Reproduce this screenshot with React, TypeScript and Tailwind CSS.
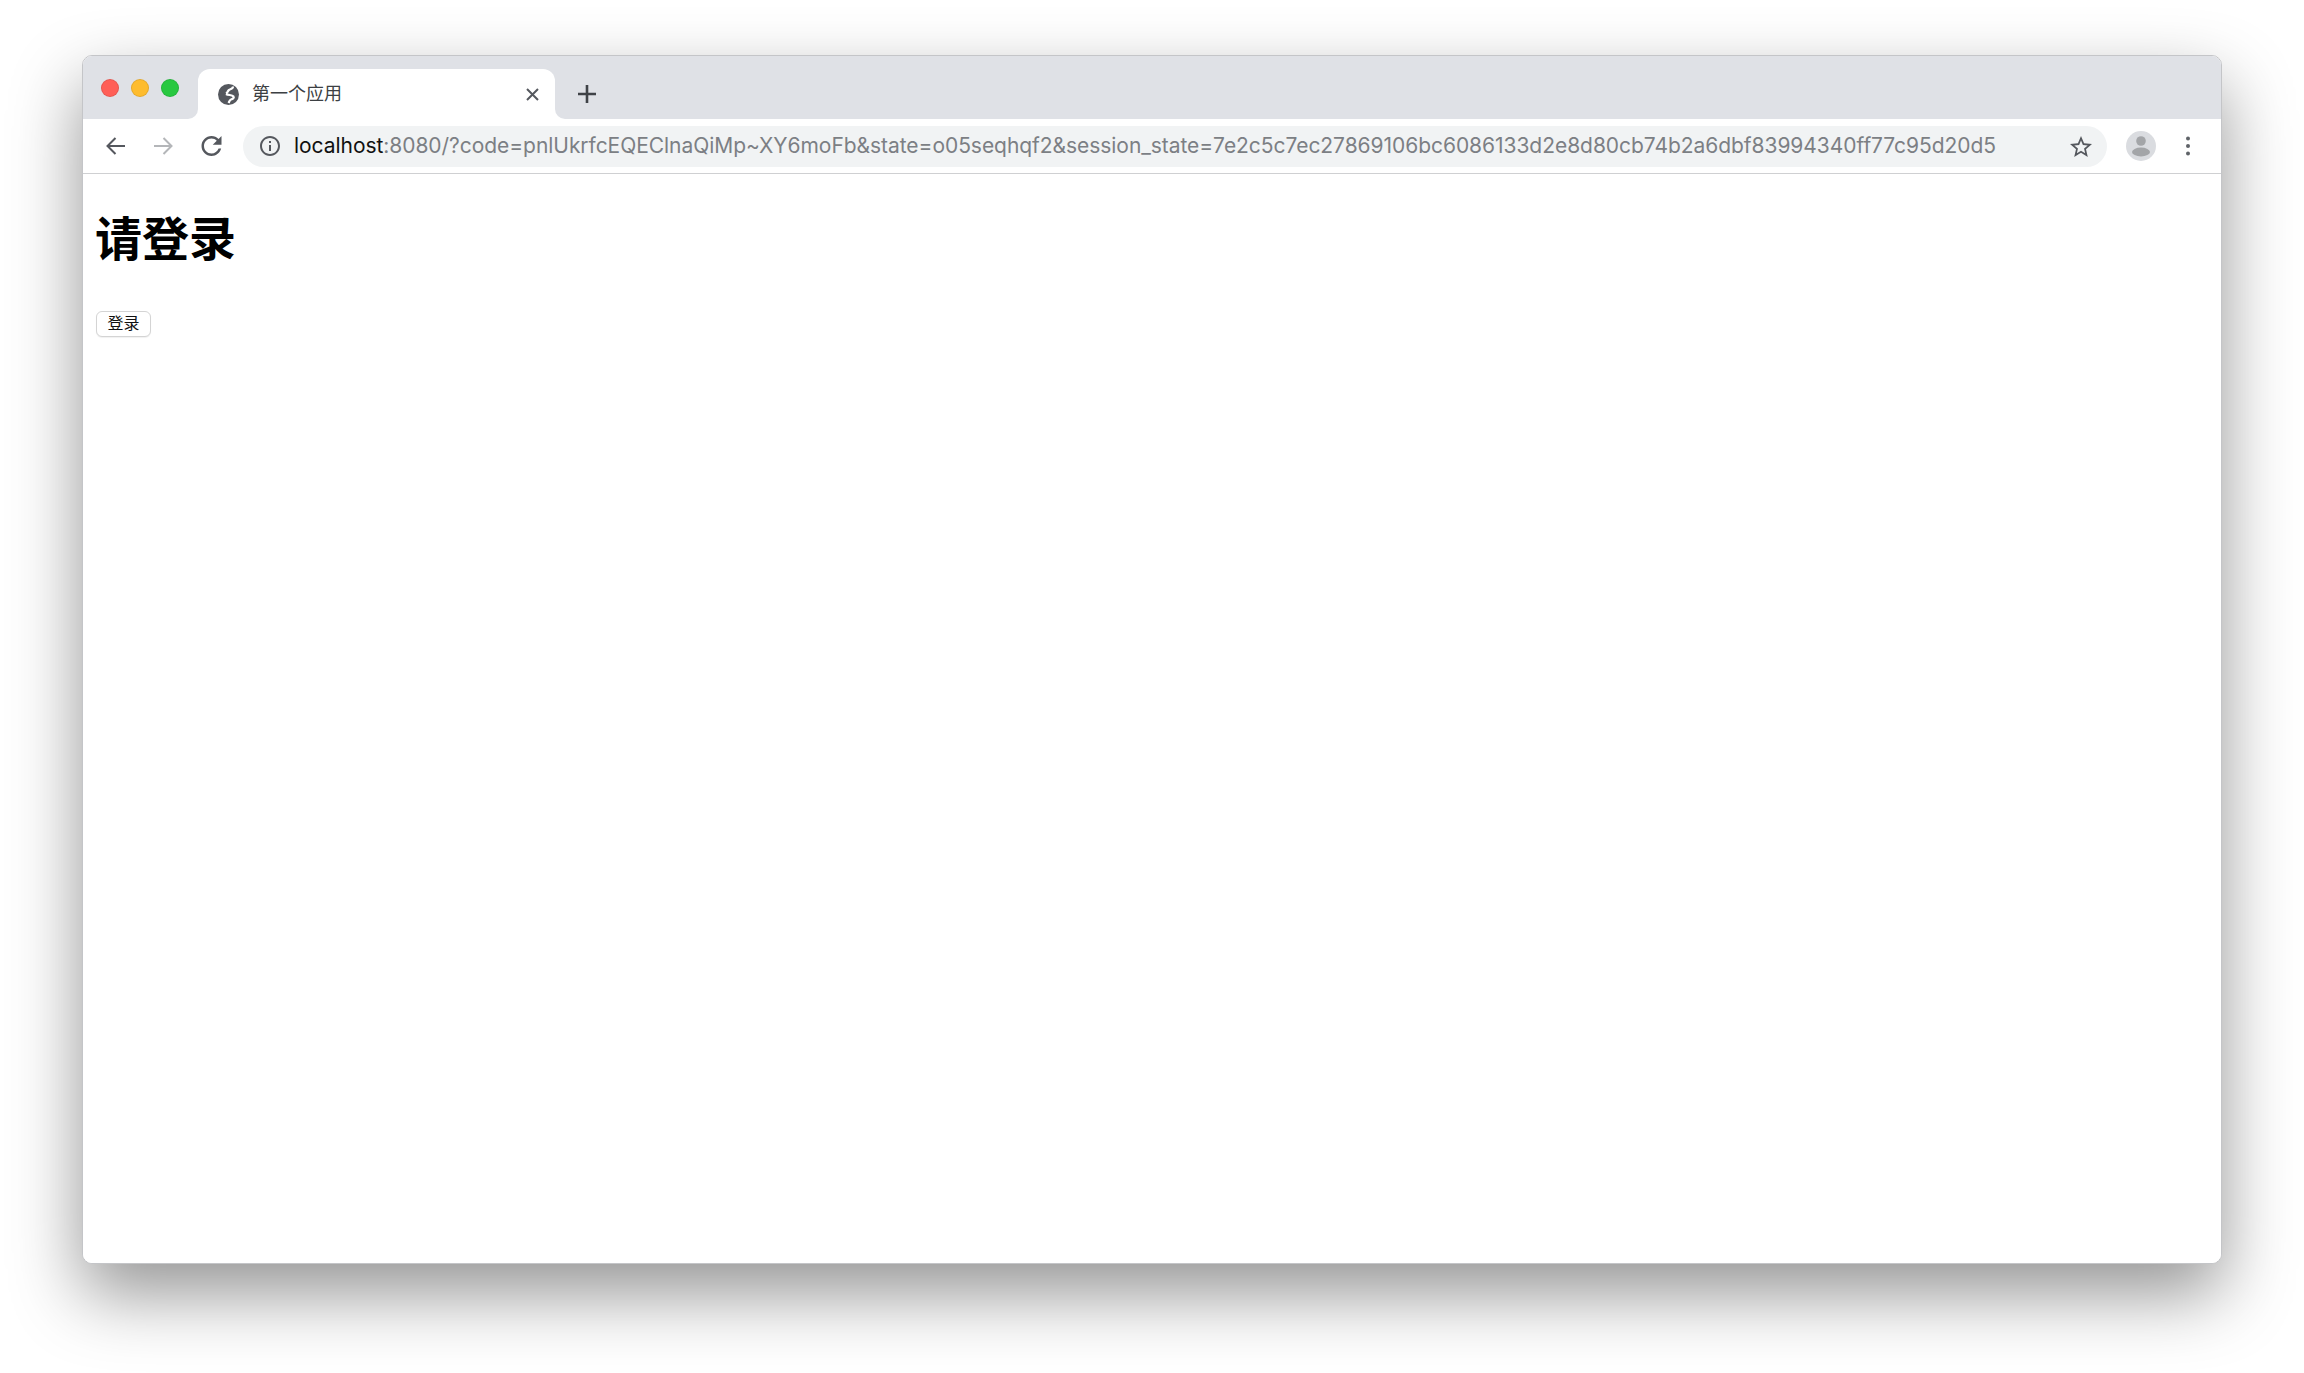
import React from 'react';

const TrafficLight: React.FC<{ color: string }> = ({ color }) => (
  <span className={`h-[18px] w-[18px] rounded-full border border-black/10 ${color}`} />
);

const Globe: React.FC = () => (
  <svg viewBox="0 0 21 21" className="h-[21px] w-[21px]">
    <circle cx="10.5" cy="10.5" r="10.5" fill="#55585e" />
    <path d="M15 2.5C15 5 12.5 5 11 6C9.5 7 10 8.5 8 9.5" fill="none" stroke="#fff" strokeWidth="2.2" />
    <path d="M8 10C10.5 11.5 14 10.5 15.5 12.5C16.5 14 14.5 15 13 15.5C11.5 16 11.5 17.5 10.5 19" fill="none" stroke="#fff" strokeWidth="2.2" />
  </svg>
);

const Avatar: React.FC = () => (
  <svg viewBox="0 0 30 30" className="h-[30px] w-[30px]">
    <circle cx="15" cy="15" r="15" fill="#dadce0" />
    <circle cx="15" cy="10" r="4.8" fill="#a3a5a8" />
    <ellipse cx="15" cy="21" rx="9" ry="4.4" fill="#a3a5a8" />
  </svg>
);

const NavArrow: React.FC<{ flip?: boolean; className: string }> = ({ flip, className }) => (
  <svg viewBox="0 0 20 20" className={`h-[20px] w-[20px] ${className}`} fill="none" stroke="currentColor" strokeWidth="2">
    {flip ? <path d="M1 10H18.5M10.5 2L18.5 10L10.5 18" /> : <path d="M19 10H1.5M9.5 2L1.5 10L9.5 18" />}
  </svg>
);

const App: React.FC = () => {
  return (
    <div className="h-[1373px] w-[2304px] overflow-hidden bg-white pl-[82px] pt-[55px]">
      <div className="flex h-[1209px] w-[2140px] flex-col overflow-hidden rounded-[10px] border border-[#c4c5c8] bg-white shadow-[0_30px_70px_rgba(0,0,0,0.42)]">
        {/* tab strip */}
        <div className="flex h-[63px] shrink-0 items-end bg-[#dfe1e6]">
          <div className="flex h-[51px] w-[115px] items-start gap-[12px] pl-[18px] pt-[11px]">
            <TrafficLight color="bg-[#ff5f57]" />
            <TrafficLight color="bg-[#febc2e]" />
            <TrafficLight color="bg-[#28c840]" />
          </div>
          <div className="relative flex h-[50px] w-[357px] items-center rounded-t-[12px] bg-white pl-[20px] pr-[16px]">
            <span className="absolute bottom-0 left-[-10px] h-[10px] w-[10px] bg-white">
              <span className="block h-full w-full rounded-br-[10px] bg-[#dfe1e6]" />
            </span>
            <span className="absolute bottom-0 right-[-10px] h-[10px] w-[10px] bg-white">
              <span className="block h-full w-full rounded-bl-[10px] bg-[#dfe1e6]" />
            </span>
            <Globe />
            <span className="ml-[13px] flex-1 font-['Liberation_Sans','Noto_Sans_CJK_SC',sans-serif] text-[18px] text-[#3c4043]">第一个应用</span>
            <svg viewBox="0 0 13 13" className="h-[13px] w-[13px] text-[#55585e]" fill="none" stroke="currentColor" strokeWidth="2">
              <path d="M1 1L12 12M12 1L1 12" />
            </svg>
          </div>
          <div className="flex h-[50px] items-center pl-[23px]">
            <svg viewBox="0 0 18 18" className="h-[18px] w-[18px] text-[#3f4247]" fill="none" stroke="currentColor" strokeWidth="2.6">
              <path d="M9 0V18M0 9H18" />
            </svg>
          </div>
        </div>

        {/* toolbar */}
        <div className="flex h-[55px] shrink-0 items-center border-b border-[#cfd0d2] bg-white pl-[23px]">
          <NavArrow className="text-[#55585e]" />
          <NavArrow flip className="ml-[27px] text-[#b4b6b9]" />
          <svg viewBox="4 4 16 16" className="ml-[28px] h-[20px] w-[21px] text-[#55585e]" fill="currentColor">
            <path d="M17.65 6.35C16.2 4.9 14.21 4 12 4c-4.42 0-7.99 3.58-7.99 8s3.57 8 7.99 8c3.73 0 6.84-2.55 7.73-6h-2.08c-.82 2.33-3.04 4-5.65 4-3.31 0-6-2.69-6-6s2.69-6 6-6c1.66 0 3.14.69 4.22 1.78L13 11h7V4l-2.35 2.35z" />
          </svg>
          <div className="ml-[21px] flex h-[41px] w-[1864px] items-center rounded-full bg-[#f1f3f4] pl-[17px] pr-[15px]">
            <svg viewBox="2 2 20 20" className="h-[20px] w-[20px] text-[#55585e]" fill="currentColor">
              <path d="M11 7h2v2h-2zm0 4h2v6h-2zm1-9C6.48 2 2 6.48 2 12s4.48 10 10 10 10-4.48 10-10S17.52 2 12 2zm0 18c-4.41 0-8-3.59-8-8s3.59-8 8-8 8 3.59 8 8-3.59 8-8 8z" />
            </svg>
            <div className="ml-[14px] flex-1 whitespace-nowrap font-['Inter',sans-serif] text-[21px] tracking-[-0.05px] text-[#7c7f84]">
              <span className="text-[#111111]">localhost</span>:8080/?code=pnlUkrfcEQEClnaQiMp~XY6moFb&amp;state=o05seqhqf2&amp;session_state=7e2c5c7ec27869106bc6086133d2e8d80cb74b2a6dbf83994340ff77c95d20d5
            </div>
            <svg viewBox="2 2 20 19" className="h-[21px] w-[22px] text-[#55585e]" fill="currentColor">
              <path d="M22 9.24l-7.19-.62L12 2 9.19 8.63 2 9.24l5.46 4.73L5.82 21 12 17.27 18.18 21l-1.63-7.03L22 9.24zM12 15.4l-3.76 2.27 1-4.28-3.32-2.88 4.38-.38L12 6.1l1.71 4.04 4.38.38-3.32 2.88 1 4.28L12 15.4z" />
            </svg>
          </div>
          <div className="ml-[19px]">
            <Avatar />
          </div>
          <svg viewBox="0 0 4 20" className="ml-[30px] h-[20px] w-[4px]" fill="#5f6368">
            <circle cx="2" cy="2.5" r="2" />
            <circle cx="2" cy="10" r="2" />
            <circle cx="2" cy="17.5" r="2" />
          </svg>
        </div>

        {/* page content */}
        <div className="flex-1 bg-white pl-[12px] font-['Liberation_Sans','Noto_Sans_CJK_SC',sans-serif]">
          <h1 className="mt-[38px] text-[47px] font-bold leading-[56px] text-black">请登录</h1>
          <button className="ml-[1px] mt-[43px] flex h-[26px] w-[55px] items-center justify-center rounded-[6px] border border-[#d4d4d4] bg-white text-[16px] leading-none text-[#111111] shadow-[0_1px_1px_rgba(0,0,0,0.06)]">
            登录
          </button>
        </div>
      </div>
    </div>
  );
};

export default App;
